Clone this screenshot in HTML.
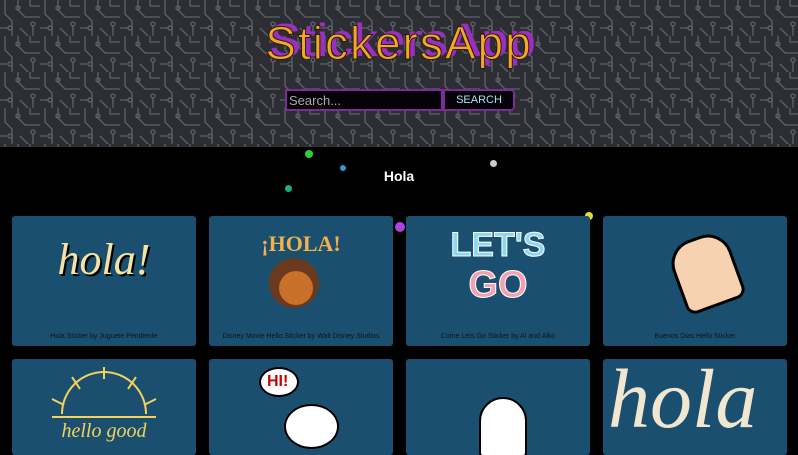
<!DOCTYPE html>
<html><head><meta charset="utf-8"><style>
*{margin:0;padding:0;box-sizing:border-box}
html,body{width:798px;height:455px;overflow:hidden}
body{background:#000;font-family:"Liberation Sans",sans-serif;position:relative}
header{position:absolute;left:0;top:0;width:798px;height:147px;background:#2c2e34;overflow:hidden}
h1{position:absolute;left:0;width:798px;top:16px;text-align:center;font:46px "Liberation Sans",sans-serif;color:#f5a623;-webkit-text-stroke:1px #2a1a10;text-shadow:4px -3px 0 #9b2fc0,5px -3px 0 #9b2fc0;letter-spacing:2px}
.inp{position:absolute;left:285px;top:89px;width:158px;height:22px;background:#050208;border:2px solid #7b2b9a;color:#aaa;font-size:13px;padding:2px 2px}
.btn{position:absolute;left:443px;top:89px;width:72px;height:22px;background:#050208;border:2px solid #7b2b9a;border-radius:0 4px 4px 0;color:#a9e3ee;font-size:11px;text-align:center;line-height:18px}
.hola{position:absolute;top:168px;width:798px;text-align:center;color:#fff;font-weight:bold;font-size:14px}
.card{position:absolute;width:184px;height:130px;background:#1b4f6f;border-radius:3px;overflow:hidden}
.cap{position:absolute;bottom:6px;width:100%;text-align:center;font-size:7px;color:#0a1620}
.dot{position:absolute;border-radius:50%}
</style></head><body>
<header>
<svg width="798" height="147" style="position:absolute;left:0;top:0">
<defs><pattern id="p" width="40" height="36" patternUnits="userSpaceOnUse">
<g stroke="#60626a" stroke-width="1.3" fill="none">
<path d="M5 0V14L12 21V36M18 0V10L25 17H40M30 0V6H40M33 26V36M0 28H8M20 28L28 36"/>
<circle cx="33" cy="24" r="2"/><circle cx="10" cy="28" r="2"/><circle cx="18" cy="8" r="2"/>
</g></pattern></defs>
<rect width="798" height="147" fill="url(#p)"/>
</svg>
<h1>StickersApp</h1>
<div class="inp">Search...</div>
<div class="btn">SEARCH</div>
</header>
<div class="dot" style="left:305px;top:150px;width:8px;height:8px;background:#3c3"></div>
<div class="dot" style="left:285px;top:185px;width:7px;height:7px;background:#2a8"></div>
<div class="dot" style="left:490px;top:160px;width:7px;height:7px;background:#ccc"></div>
<div class="dot" style="left:340px;top:165px;width:6px;height:6px;background:#39c"></div>
<div class="dot" style="left:395px;top:222px;width:10px;height:10px;background:#a4d"></div>
<div class="dot" style="left:585px;top:212px;width:8px;height:8px;background:#dd3"></div>
<div class="hola">Hola</div>

<div class="card" style="left:12px;top:216px"><div style="position:absolute;top:18px;width:100%;text-align:center;font:italic 44px 'Liberation Serif',serif;color:#f3e3a5;text-shadow:2px 2px 0 #000">hola!</div><div class="cap">Hola Sticker by Juguete Pendiente</div></div>
<div class="card" style="left:209px;top:216px"><div style="position:absolute;top:15px;width:100%;text-align:center;font:bold 22px 'Liberation Serif',serif;color:#f0b24a">¡HOLA!</div><div class="dot" style="left:60px;top:42px;width:50px;height:50px;background:#6b3a1e"></div><div class="dot" style="left:70px;top:55px;width:34px;height:34px;background:#c8702a"></div><div class="cap">Disney Movie Hello Sticker by Walt Disney Studios</div></div>
<div class="card" style="left:406px;top:216px"><div style="position:absolute;top:10px;width:100%;text-align:center;font:bold 34px 'Liberation Sans',sans-serif;color:#8fd6f0;-webkit-text-stroke:1px #fff">LET'S</div><div style="position:absolute;top:48px;width:100%;text-align:center;font:bold 38px 'Liberation Sans',sans-serif;color:#f4a0b0;-webkit-text-stroke:1px #fff">GO</div><div class="cap">Come Lets Go Sticker by Al and Alko</div></div>
<div class="card" style="left:603px;top:216px"><div style="position:absolute;left:72px;top:20px;width:62px;height:72px;background:#f7d2b0;border:3px solid #000;border-radius:25px 25px 10px 10px;transform:rotate(-20deg)"></div><div class="cap">Buenos Dias Hello Sticker</div></div>

<div class="card" style="left:12px;top:359px;height:96px"><svg width="184" height="96" style="position:absolute;top:0"><g stroke="#f3d35a" stroke-width="2" fill="none"><path d="M50 55A42 42 0 0 1 134 55M40 58H144"/><path d="M92 8V20M60 18L68 30M124 18L116 30M40 40L52 46M144 40L132 46"/></g><text x="92" y="78" text-anchor="middle" font-family="Liberation Serif" font-style="italic" font-size="20" fill="#f3d35a">hello good</text></svg></div>
<div class="card" style="left:209px;top:359px;height:96px"><div class="dot" style="left:50px;top:8px;width:40px;height:30px;background:#fff;border:2px solid #000"></div><div style="position:absolute;left:58px;top:14px;font:bold 16px sans-serif;color:#c00">HI!</div><div class="dot" style="left:75px;top:45px;width:55px;height:45px;background:#fff;border:2px solid #000"></div></div>
<div class="card" style="left:406px;top:359px;height:96px"><div style="position:absolute;left:73px;top:38px;width:48px;height:60px;background:#fff;border:2px solid #000;border-radius:24px 24px 4px 4px"></div></div>
<div class="card" style="left:603px;top:359px;height:96px"><div style="position:absolute;left:5px;top:-8px;font:italic 84px 'Liberation Serif',serif;color:#f1e6cf">hola</div></div>
</body></html>
